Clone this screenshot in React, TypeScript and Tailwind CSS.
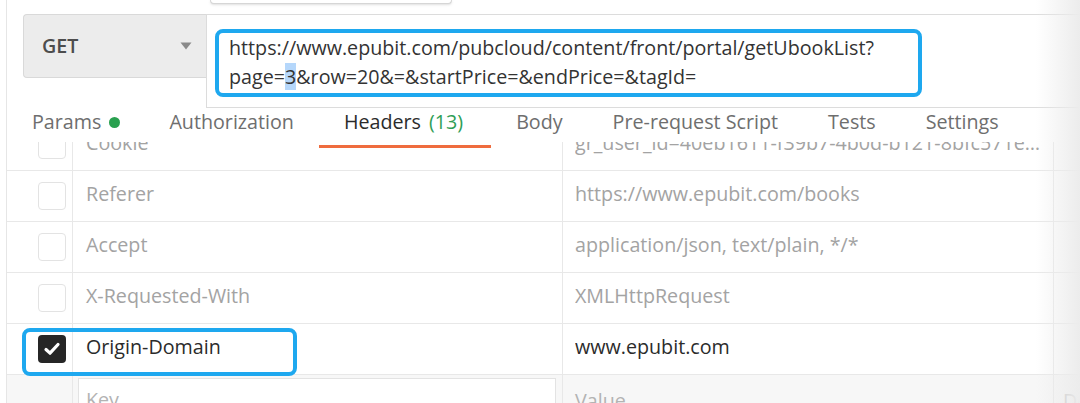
import { FC } from "react";

type Row = { key: string; value: string; checked?: boolean };

const rows: Row[] = [
  {
    key: "Cookie",
    value:
      "gr_user_id=40eb1611-f39b7-4b0d-b121-8bfc571e53b8; Hm_lvt_dd4738b5fb302cb062ef19107df5d2e4=1597",
  },
  { key: "Referer", value: "https://www.epubit.com/books" },
  { key: "Accept", value: "application/json, text/plain, */*" },
  { key: "X-Requested-With", value: "XMLHttpRequest" },
  { key: "Origin-Domain", value: "www.epubit.com", checked: true },
];

const tabs = ["Body", "Pre-request Script", "Tests", "Settings"];

const Checkbox: FC<{ checked?: boolean }> = ({ checked }) =>
  checked ? (
    <div className="flex size-[28px] items-center justify-center rounded-[4px] bg-[#262626]">
      <svg width="20" height="20" viewBox="0 0 20 20" fill="none">
        <path d="M4 10.5 L8 14.2 L16 5.5" stroke="#fff" strokeWidth="3.2" strokeLinecap="round" strokeLinejoin="round" />
      </svg>
    </div>
  ) : (
    <div className="size-[28px] rounded-[4px] border-[1.5px] border-[#e3e3e3] bg-white" />
  );

const HeaderRow: FC<{ row: Row; first?: boolean }> = ({ row, first }) => (
  <div className={`relative flex h-[51px] shrink-0 border-b border-[#e8e8e8] ${first ? "-mt-[22px]" : ""}`}>
    <div className="flex w-[66px] shrink-0 items-center justify-end border-r border-[#e8e8e8] pr-[6px]">
      <Checkbox checked={row.checked} />
    </div>
    <div
      className={`flex w-[490px] shrink-0 items-center border-r border-[#e8e8e8] pb-[4px] pl-[13px] ${
        row.checked ? "text-[#2b2b2b]" : "text-[#a3a3a3]"
      }`}
    >
      {row.key}
    </div>
    <div
      className={`flex w-[491px] shrink-0 items-center border-r border-[#e8e8e8] pb-[4px] pl-[12px] pr-[12px] ${
        row.checked ? "text-[#2b2b2b]" : "text-[#a3a3a3]"
      }`}
    >
      <span className="truncate">{row.value}</span>
    </div>
    <div className="flex-1" />
    {row.checked && (
      <div className="absolute left-[15px] top-[4px] z-10 h-[48px] w-[275px] rounded-[8px] border-[4px] border-[#1ea8ef]" />
    )}
  </div>
);

const App: FC = () => {
  return (
    <div className="relative h-[403px] w-[1080px] overflow-hidden bg-white font-['Open_Sans',sans-serif] text-[19.7px]">
      <div className="ml-[6px] flex h-full flex-col border-l border-[#e6e6e6]">
        {/* request line */}
        <div className="flex items-start pt-[14px]">
          <div className="ml-[16px] flex h-[64px] w-[183px] shrink-0 items-center justify-between rounded-l-[4px] border-y border-l border-[#d9d9d9] bg-[#ececec] pl-[18px] pr-[14px]">
            <span className="font-semibold text-[#4d4d4d]">GET</span>
            <svg width="12" height="8" viewBox="0 0 12 8">
              <path d="M0.5 0.5 H11.5 L6 7.5 Z" fill="#8a8a8a" />
            </svg>
          </div>
          <div className="h-[94px] flex-1 border-y border-l border-[#dcdcdc] bg-white">
            <div className="ml-[8px] mt-[14px] h-[68px] w-[707px] rounded-[8px] border-[4px] border-[#1ea8ef] pl-[10px] leading-[29px] text-[#333]">
              https://www.epubit.com/pubcloud/content/front/portal/getUbookList?
              <br />
              page=<span className="bg-[#b5d7fb]">3</span>&amp;row=20&amp;=&amp;startPrice=&amp;endPrice=&amp;tagId=
            </div>
          </div>
        </div>

        {/* tabs */}
        <div className="flex h-[34px] shrink-0 text-[#6e6e6e]">
          <div className="flex h-full items-center pb-[6px] pl-[25px] pr-[24px]">
            Params
            <span className="ml-[8px] size-[11px] rounded-full bg-[#29a04f]" />
          </div>
          <div className="flex h-full items-center px-[25px] pb-[6px]">Authorization</div>
          <div className="relative flex h-full items-center pb-[6px] pl-[25px] pr-[28px] text-[#2b2b2b]">
            Headers<span className="ml-[8px] text-[#2f9e57]">(13)</span>
            <span className="absolute left-0 right-0 top-[37px] z-10 h-[3px] bg-[#ef6c3e]" />
          </div>
          {tabs.map((t) => (
            <div key={t} className="flex h-full items-center px-[25px] pb-[6px]">
              {t}
            </div>
          ))}
        </div>

        {/* headers table */}
        <div className="flex flex-1 flex-col overflow-hidden">
          {rows.map((r, i) => (
            <HeaderRow key={r.key} row={r} first={i === 0} />
          ))}
          <div className="flex h-[51px] shrink-0 bg-[#f7f7f7] text-[#b3b3b3]">
            <div className="w-[66px] shrink-0 border-r border-[#e8e8e8]" />
            <div className="w-[490px] shrink-0 border-r border-[#e8e8e8] pl-[5px] pr-[6px] pt-[3px]">
              <div className="flex h-[44px] items-center border border-[#e3e3e3] bg-white pl-[7px]">Key</div>
            </div>
            <div className="flex w-[491px] shrink-0 items-center border-r border-[#e8e8e8] pl-[12px]">Value</div>
            <div className="flex flex-1 items-center overflow-hidden whitespace-nowrap pl-[9px]">Description</div>
          </div>
        </div>
      </div>

      {/* dropdown edge peeking from above */}
      <div className="absolute left-[210px] top-0 h-[4px] w-[242px] rounded-b-[4px] border border-t-0 border-[#d6d6d6] bg-white shadow-sm" />
      {/* right fade */}
      <div className="pointer-events-none absolute right-0 top-0 h-full w-[44px] bg-linear-to-r from-white/0 to-[#ececec]" />
    </div>
  );
};

export default App;
